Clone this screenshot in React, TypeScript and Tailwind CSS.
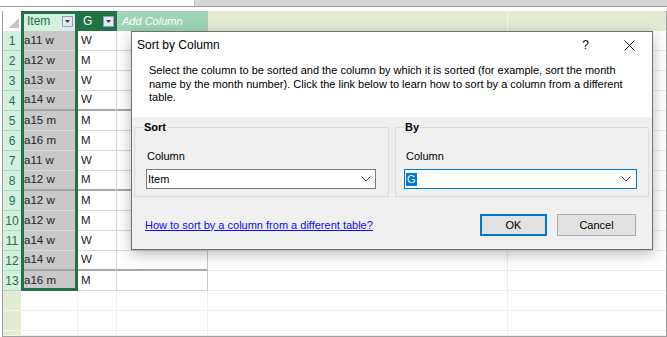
const rows: [string, string][] = [
  ["a11 w", "W"],
  ["a12 w", "M"],
  ["a13 w", "W"],
  ["a14 w", "W"],
  ["a15 m", "M"],
  ["a16 m", "M"],
  ["a11 w", "W"],
  ["a12 w", "M"],
  ["a12 w", "M"],
  ["a12 w", "M"],
  ["a14 w", "W"],
  ["a14 w", "W"],
  ["a16 m", "M"],
];

function FilterButton() {
  return (
    <span className="flex h-[11px] w-[11px] items-center justify-center border border-[#8fa2bb] bg-[#e4e9f0]">
      <svg width="5" height="3" viewBox="0 0 5 3">
        <polygon points="0,0 5,0 2.5,3" fill="#3c3c3c" />
      </svg>
    </span>
  );
}

function Chevron() {
  return (
    <svg width="10" height="6" viewBox="0 0 10 6" className="shrink-0">
      <polyline points="0.5,0.5 5,5 9.5,0.5" fill="none" stroke="#444" strokeWidth="1" />
    </svg>
  );
}

function DataRow({ n, item, g }: { n: number; item: string; g: string }) {
  const thick = n === 4 || n === 8 || n === 12;
  return (
    <div className="flex h-[20px]">
      <div className="flex w-[18px] items-center justify-center border-b border-[#a8dcc0] bg-[#d3f0e0] text-[12px] text-[#217346]">
        {n}
      </div>
      <div
        className={`flex w-[57px] items-center bg-[#c8c8c8] pl-[3px] ${thick ? "border-b-2 border-[#a3a3a3]" : "border-b border-[#dadada]"}`}
      >
        {item}
      </div>
      <div
        className={`flex w-[39px] items-center border-r border-r-[#d6d6d6] pl-[3px] ${thick ? "border-b-2 border-b-[#a8a8a8]" : "border-b border-b-[#d6d6d6]"}`}
      >
        {g}
      </div>
      <div
        className={`w-[91px] border-r border-r-[#c8c8c8] ${thick ? "border-b-2 border-b-[#a8a8a8]" : "border-b border-b-[#d6d6d6]"}`}
      />
      <div className="w-[300px] border-b border-r border-[#ececec]" />
      <div className="flex-1 border-b border-[#ececec]" />
    </div>
  );
}

function EmptyRow({ last }: { last?: boolean }) {
  return (
    <div className={`flex ${last ? "flex-1" : "h-[20px]"}`}>
      <div className="w-[18px] border-b border-[#f2f5ea] bg-[#e3ebd3]" />
      <div className="w-[57px] border-b border-r border-[#efefef]" />
      <div className="w-[39px] border-b border-r border-[#efefef]" />
      <div className="w-[91px] border-b border-r border-[#efefef]" />
      <div className="w-[300px] border-b border-r border-[#efefef]" />
      <div className="flex-1 border-b border-[#efefef]" />
    </div>
  );
}

export default function App() {
  return (
    <div className="relative flex h-[337px] w-[667px] flex-col overflow-hidden bg-white font-['Liberation_Sans',Arial,sans-serif] text-[11.5px] text-[#222]">
      {/* formula strip */}
      <div className="flex h-[7px] shrink-0 border-b border-[#9c9c9c] bg-[#d6d6d6]">
        <div className="w-[195px] border-r border-[#bdbdbd] bg-white" />
      </div>
      <div className="h-[4px] shrink-0" />

      {/* sheet */}
      <div className="relative ml-[2px] flex flex-1 flex-col border-b border-l border-r border-[#a0a0a0]">
        <div className="flex h-[20px] shrink-0">
          <div className="flex w-[18px] items-end justify-end bg-white pb-[3px] pr-[2px]">
            <svg width="10" height="10" viewBox="0 0 10 10">
              <polygon points="10,0 10,10 0,10" fill="#c4c4c4" />
            </svg>
          </div>
          <div className="flex w-[57px] items-center justify-between bg-[#d3f0e0] pl-[6px] pr-[5px] text-[12px] text-[#217346]">
            <span>Item</span>
            <FilterButton />
          </div>
          <div className="flex w-[39px] items-center justify-between bg-[#217346] pl-[5px] pr-[3px] text-[12px] text-white">
            <span>G</span>
            <FilterButton />
          </div>
          <div className="flex w-[91px] items-center border-r border-[#c0c0c0] bg-[#9fd5b7] pl-[5px] text-[11px] italic text-white">
            Add Column
          </div>
          <div className="w-[300px] border-r border-[#f4f6ee] bg-[#e3ebd3]" />
          <div className="flex-1 bg-[#e3ebd3]" />
        </div>

        {rows.map(([item, g], i) => (
          <DataRow key={i} n={i + 1} item={item} g={g} />
        ))}
        <EmptyRow />
        <EmptyRow />
        <EmptyRow last />

        {/* column selection */}
        <div className="pointer-events-none absolute left-[18px] top-0 h-[280px] w-[57px] border-[3px] border-[#217346]" />
      </div>

      {/* dialog */}
      <div className="absolute left-[131px] top-[31px] flex h-[219px] w-[522px] flex-col border border-[#707070] bg-[#f0f0f0] text-[11px] text-black shadow-[0_4px_14px_rgba(0,0,0,0.28)]">
        <div className="flex h-[26px] shrink-0 items-center bg-white pl-[5px] pr-[17px] text-[12px]">
          <span>Sort by Column</span>
          <span className="ml-auto mr-[35px]">?</span>
          <svg width="11" height="11" viewBox="0 0 11 11">
            <line x1="0.5" y1="0.5" x2="10.5" y2="10.5" stroke="#222" strokeWidth="1" />
            <line x1="10.5" y1="0.5" x2="0.5" y2="10.5" stroke="#222" strokeWidth="1" />
          </svg>
        </div>
        <div className="h-[59px] shrink-0 bg-white pl-[17px] pr-[20px] pt-[6px] leading-[13.5px]">
          <p>Select the column to be sorted and the column by which it is sorted (for example, sort the month</p>
          <p>name by the month number). Click the link below to learn how to sort by a column from a different</p>
          <p>table.</p>
        </div>

        <div className="mt-[10px] flex gap-[6px] pl-[2px]">
          <div className="h-[70px] w-[255px] border border-[#dcdcdc]">
            <div className="-mt-[7px] ml-[8px] w-fit bg-[#f0f0f0] px-[1px] font-bold leading-[13px]">Sort</div>
            <div className="ml-[12px] mt-[16px] leading-[13px]">Column</div>
            <div className="ml-[11px] mt-[6px] flex h-[20px] w-[230px] items-center justify-between border border-[#7a7a7a] bg-white pl-[1px] pr-[4px]">
              <span>Item</span>
              <Chevron />
            </div>
          </div>
          <div className="h-[70px] w-[254px] border border-[#dcdcdc]">
            <div className="-mt-[7px] ml-[8px] w-fit bg-[#f0f0f0] px-[1px] font-bold leading-[13px]">By</div>
            <div className="ml-[10px] mt-[16px] leading-[13px]">Column</div>
            <div className="ml-[8px] mt-[6px] flex h-[20px] w-[233px] items-center justify-between border border-[#0078d7] bg-white pl-[1px] pr-[5px]">
              <span className="bg-[#0078d7] px-[1px] leading-[13px] text-white">G</span>
              <Chevron />
            </div>
          </div>
        </div>

        <div className="mt-[17px] flex items-center pl-[13px] pr-[16px]">
          <a href="#" className="text-[#0a0aff] underline">
            How to sort by a column from a different table?
          </a>
          <button
            type="button"
            className="ml-auto flex h-[22px] w-[67px] items-center justify-center border-2 border-[#0078d7] bg-[#e1e1e1]"
          >
            OK
          </button>
          <button
            type="button"
            className="ml-[10px] flex h-[22px] w-[79px] items-center justify-center border border-[#adadad] bg-[#e1e1e1]"
          >
            Cancel
          </button>
        </div>
      </div>
    </div>
  );
}
